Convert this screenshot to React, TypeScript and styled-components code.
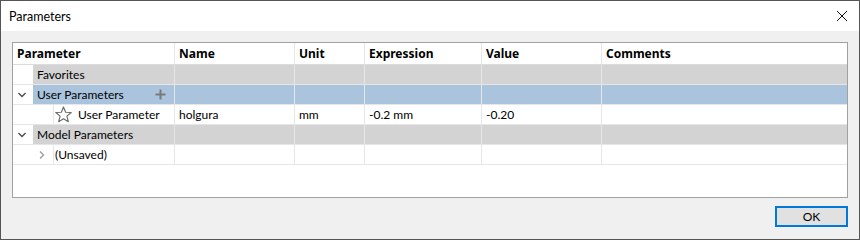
import React from "react";
import styled, { createGlobalStyle } from "styled-components";

const GlobalStyle = createGlobalStyle`
  html, body {
    margin: 0;
    padding: 0;
    background: #ffffff;
  }
  * {
    box-sizing: border-box;
  }
`;

const FONT = `"Segoe UI", Lato, "Noto Sans", Arial, sans-serif`;
const HEAD_FONT = `"Segoe UI", "Noto Sans", Arial, sans-serif`;

const Window = styled.div`
  width: 860px;
  height: 240px;
  border: 1px solid #555555;
  display: flex;
  flex-direction: column;
  font-family: ${FONT};
  font-size: 12px;
  color: #000;
  background: #f0f0f0;
`;

const TitleBar = styled.div`
  height: 30px;
  background: #ffffff;
  display: flex;
  align-items: center;
  justify-content: space-between;
  padding: 0 10px 0 8px;
`;

const Title = styled.span`
  font-size: 12.5px;
`;

const CloseButton = styled.div`
  width: 12px;
  height: 12px;
  display: flex;
  margin-right: 1px;
`;

const Body = styled.div`
  flex: 1;
  display: flex;
  flex-direction: column;
  padding: 11px 11px 0 11px;
  gap: 8px;
`;

const Table = styled.div`
  height: 156px;
  border: 1px solid #a0a0a0;
  background: #ffffff;
`;

const COLS = "162px 120px 70px 117px 120px 1fr";

const Row = styled.div<{ $head?: boolean }>`
  display: grid;
  grid-template-columns: ${COLS};
  height: ${(p) => (p.$head ? "22px" : "20px")};
  border-bottom: 1px solid ${(p) => (p.$head ? "#dcdcdc" : "#e6e6e6")};
`;

const Cell = styled.div<{ $bg?: string; $head?: boolean }>`
  display: flex;
  align-items: center;
  padding-left: ${(p) => (p.$head ? "4px" : "4px")};
  border-right: 1px solid ${(p) => (p.$bg ? "#e8e8e8" : "#e6e6e6")};
  background: ${(p) => p.$bg || "transparent"};
  font-family: ${(p) => (p.$head ? HEAD_FONT : FONT)};
  font-weight: ${(p) => (p.$head ? 700 : 400)};
  white-space: nowrap;
  overflow: hidden;
  &:last-child {
    border-right: none;
  }
`;

const TreeCell = styled.div`
  display: flex;
  border-right: 1px solid #e6e6e6;
`;

const Gutter = styled.div<{ $w: number }>`
  width: ${(p) => p.$w}px;
  flex: none;
  display: flex;
  align-items: center;
  justify-content: flex-end;
  padding-right: 7px;
`;

const TreeLabel = styled.div<{ $bg?: string; $line?: boolean }>`
  flex: 1;
  display: flex;
  align-items: center;
  gap: 6px;
  padding-left: ${(p) => (p.$line ? "1px" : "4px")};
  background: ${(p) => p.$bg || "transparent"};
  border-left: ${(p) => (p.$line ? "1px solid #e6e6e6" : "none")};
  white-space: nowrap;
  position: relative;
`;

const AddIcon = styled.div`
  position: absolute;
  right: 8px;
  top: 4px;
  width: 11px;
  height: 11px;
  display: flex;
`;

const Footer = styled.div`
  display: flex;
  justify-content: flex-end;
`;

const OkButton = styled.button`
  width: 73px;
  height: 21px;
  border: 2px solid #0078d7;
  background: #e1e1e1;
  font-family: ${FONT};
  font-size: 12px;
  color: #000;
  padding: 0;
`;

const Chevron = ({ dir, color }: { dir: "down" | "right"; color: string }) => (
  <svg width="8" height="8" viewBox="0 0 8 8">
    {dir === "down" ? (
      <polyline points="0.5,2 4,5.5 7.5,2" fill="none" stroke={color} strokeWidth="1.3" />
    ) : (
      <polyline points="2,0.5 5.5,4 2,7.5" fill="none" stroke={color} strokeWidth="1.3" />
    )}
  </svg>
);

const Star = () => (
  <svg width="17" height="17" viewBox="0 0 18 18">
    <polygon
      points="9,1 11.3,6.6 17.2,6.9 12.6,10.7 14.1,16.6 9,13.4 3.9,16.6 5.4,10.7 0.8,6.9 6.7,6.6"
      fill="none"
      stroke="#6a6a6a"
      strokeWidth="1.2"
      strokeLinejoin="round"
    />
  </svg>
);

const GRAY = "#d3d3d3";
const BLUE = "#a9c4dc";

interface TreeRow {
  label: string;
  bg?: string;
  indent: number;
  toggle?: "down" | "right";
  star?: boolean;
  add?: boolean;
  line?: boolean;
  values: string[];
}

const rows: TreeRow[] = [
  { label: "Favorites", bg: GRAY, indent: 20, values: ["", "", "", "", ""] },
  { label: "User Parameters", bg: BLUE, indent: 20, toggle: "down", add: true, values: ["", "", "", "", ""] },
  { label: "User Parameter", indent: 40, star: true, line: true, values: ["holgura", "mm", "-0.2 mm", "-0.20", ""] },
  { label: "Model Parameters", bg: GRAY, indent: 20, toggle: "down", values: ["", "", "", "", ""] },
  { label: "(Unsaved)", indent: 40, toggle: "right", line: true, values: ["", "", "", "", ""] },
];

const headers = ["Parameter", "Name", "Unit", "Expression", "Value", "Comments"];

export default function App() {
  return (
    <>
      <GlobalStyle />
      <Window>
        <TitleBar>
          <Title>Parameters</Title>
          <CloseButton>
            <svg width="12" height="12" viewBox="0 0 12 12">
              <path d="M1 1 L11 11 M11 1 L1 11" stroke="#111" strokeWidth="1" />
            </svg>
          </CloseButton>
        </TitleBar>
        <Body>
          <Table>
            <Row $head>
              {headers.map((h) => (
                <Cell key={h} $head>
                  {h}
                </Cell>
              ))}
            </Row>
            {rows.map((r) => (
              <Row key={r.label}>
                <TreeCell>
                  <Gutter $w={r.indent}>
                    {r.toggle && (
                      <Chevron dir={r.toggle} color={r.toggle === "down" ? "#4a4a4a" : "#9a9a9a"} />
                    )}
                  </Gutter>
                  <TreeLabel $bg={r.bg} $line={r.line}>
                    {r.star && <Star />}
                    {r.label}
                    {r.add && (
                      <AddIcon>
                        <svg width="11" height="11" viewBox="0 0 11 11">
                          <path d="M5.5 0.5 V10.5 M0.5 5.5 H10.5" stroke="#7a7a7a" strokeWidth="2" />
                        </svg>
                      </AddIcon>
                    )}
                  </TreeLabel>
                </TreeCell>
                {r.values.map((v, i) => (
                  <Cell key={i} $bg={r.bg}>
                    {v}
                  </Cell>
                ))}
              </Row>
            ))}
          </Table>
          <Footer>
            <OkButton>OK</OkButton>
          </Footer>
        </Body>
      </Window>
    </>
  );
}
